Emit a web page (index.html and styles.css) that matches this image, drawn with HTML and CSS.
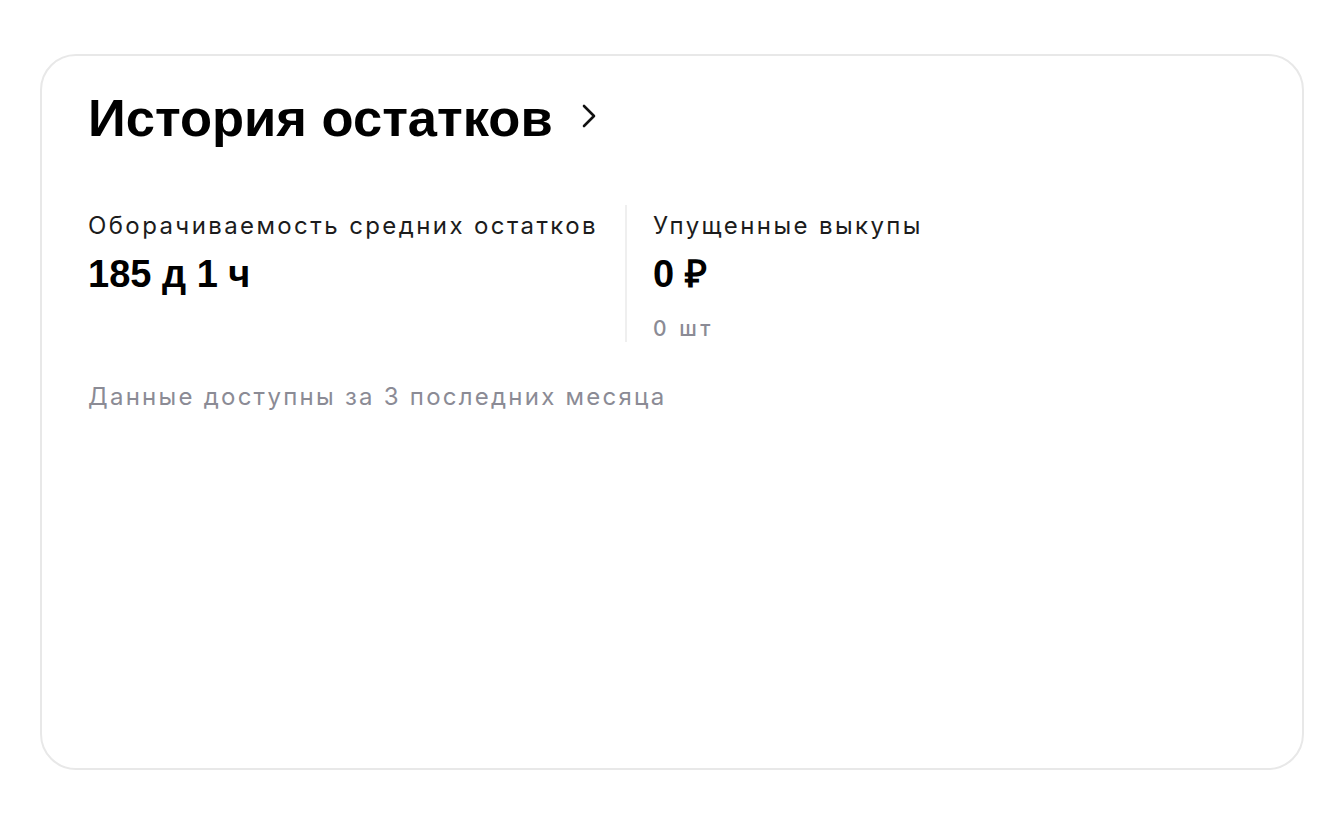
FILE: index.html
```html
<!DOCTYPE html>
<html lang="ru">
<head>
  <meta charset="utf-8">
  <title>История остатков</title>
  <link rel="stylesheet" href="styles.css">
</head>
<body>
  <div class="card">
    <h2 class="card-title">
      <span>История остатков</span>
      <svg class="chevron" width="16" height="26" viewBox="0 0 16 26">
        <path d="M3 3 L13 13 L3 23" fill="none" stroke="#111" stroke-width="2.6" stroke-linecap="round" stroke-linejoin="round"/>
      </svg>
    </h2>
    <div class="metrics">
      <div class="metric">
        <div class="metric-label">Оборачиваемость средних остатков</div>
        <div class="metric-value">185 д 1 ч</div>
      </div>
      <div class="metric">
        <div class="metric-label">Упущенные выкупы</div>
        <div class="metric-value">0 ₽</div>
        <div class="metric-sub">0 шт</div>
      </div>
    </div>
    <p class="note">Данные доступны за 3 последних месяца</p>
  </div>
</body>
</html>
```

FILE: styles.css
```css
body {
  margin: 0;
  background: #fff;
  font-family: Inter, "Liberation Sans", sans-serif;
  color: #111;
}
.card {
  box-sizing: border-box;
  width: 1264px;
  height: 716px;
  margin: 54px 0 0 40px;
  padding: 31px 46px;
  border: 2px solid #e8e8e8;
  border-radius: 36px;
}
.card-title {
  display: flex;
  align-items: center;
  gap: 28px;
  margin: 0;
  font-family: "Liberation Sans", Arial, sans-serif;
  font-size: 52.5px;
  line-height: 62px;
  font-weight: bold;
  color: #000;
}
.chevron {
  margin-top: -4px;
}
.metrics {
  display: flex;
  margin-top: 56px;
}
.metric {
  padding: 5px 27px 0 0;
}
.metric + .metric {
  padding-left: 26px;
  border-left: 2px solid #efefef;
}
.metric-label {
  font-size: 24px;
  line-height: 32px;
  letter-spacing: 2.4px;
  color: #1c1c1c;
}
.metric-value {
  margin-top: 9px;
  font-family: "Liberation Sans", Arial, sans-serif;
  font-size: 38px;
  line-height: 46px;
  font-weight: bold;
  color: #000;
}
.metric-sub {
  margin-top: 19px;
  font-size: 21px;
  line-height: 26px;
  font-weight: 500;
  letter-spacing: 3.5px;
  color: #8b8b95;
}
.note {
  margin: 39px 0 0;
  font-size: 24px;
  line-height: 32px;
  letter-spacing: 2.25px;
  color: #8b8b95;
}
```
